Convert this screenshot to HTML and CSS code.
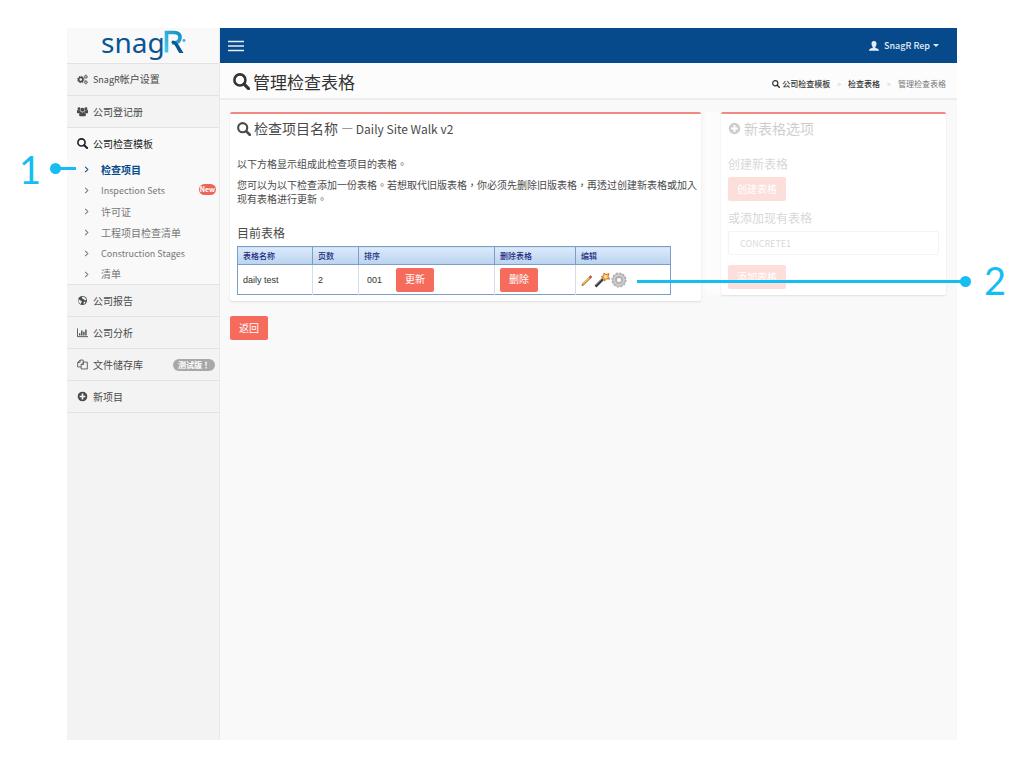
FILE: index.html
```html
<!DOCTYPE html>
<html lang="zh-CN">
<head>
<meta charset="utf-8">
<meta name="viewport" content="width=device-width, initial-scale=1">
<title>管理检查表格</title>
<link rel="stylesheet" href="styles.css">
</head>
<body>
<svg class="sprite" aria-hidden="true">
  <symbol id="search" viewBox="0 0 16 16"><circle cx="6.5" cy="6.5" r="5.2" fill="none" stroke="currentColor" stroke-width="2.4"/><path d="M10.5 10.5 14.6 14.6" stroke="currentColor" stroke-width="3" stroke-linecap="round"/></symbol>
  <symbol id="plus" viewBox="0 0 16 16"><path fill="currentColor" fill-rule="evenodd" d="M8 1a7 7 0 1 1 0 14A7 7 0 0 1 8 1ZM6.8 3.8v3H3.8v2.4h3v3h2.4v-3h3V6.800h-3v-3Z"/></symbol>
  <symbol id="chev" viewBox="0 0 16 16"><path d="M5 2l6 6-6 6" fill="none" stroke="currentColor" stroke-width="2.4"/></symbol>
</svg>
<div class="app">
  <aside class="sidebar">
    <a class="logo" href="#">
      <svg width="92" height="35" viewBox="0 0 92 35" role="img" aria-label="snagR">
        <defs><linearGradient id="bowl" x1="0" y1="1" x2="1" y2="0"><stop offset="0" stop-color="#45c8ee"/><stop offset="1" stop-color="#158fc4"/></linearGradient></defs>
        <text class="logo-text" x="1" y="25">snag</text>
        <path d="M66.500 24.500V4.500h7.500q6 0 6 5t-6 5.500H72" fill="none" stroke="url(#bowl)" stroke-width="3.600"/>
        <path d="M72.500 12.500c4 0 6 4 11 12.500h-4.200c-4-6.500-4.700-9.400-8.200-10.200Z" fill="#0a5593"/>
        <circle cx="84" cy="12.500" r="1.400" fill="#2cb6dd"/>
      </svg>
    </a>
    <nav>
      <ul class="menu">
        <li><a class="item" href="#"><svg class="ico" viewBox="0 0 16 16"><g fill="none" stroke="currentColor"><circle cx="5.500" cy="8" r="3.100" stroke-width="2.400"/><circle cx="5.500" cy="8" r="4.700" stroke-width="1.400" stroke-dasharray="1.850"/><circle cx="12.800" cy="4" r="1.700" stroke-width="1.300"/><circle cx="12.800" cy="4" r="2.600" stroke-width=".9" stroke-dasharray="1.020"/><circle cx="12.800" cy="12" r="1.700" stroke-width="1.300"/><circle cx="12.800" cy="12" r="2.600" stroke-width=".9" stroke-dasharray="1.020"/></g></svg><span><span class="latin">SnagR</span>帐户设置</span></a></li>
        <li><a class="item" href="#"><svg class="ico" viewBox="0 0 16 16"><g fill="currentColor"><circle cx="3" cy="4" r="2.100"/><circle cx="13" cy="4" r="2.100"/><circle cx="8" cy="5.500" r="3"/><path d="M0 10V7q0-1.500 1-1.500 2 1.200 3.800.5 0 2 1 3-2 0-2.600 1.500H1Q0 10.500 0 10ZM16 10V7q0-1.500-1-1.500-2 1.200-3.800.5 0 2-1 3 2 0 2.600 1.500H15q1 0 1-.5ZM3 13.500q0-4.500 2.500-5 2.500 1.600 5 0 2.500.5 2.500 5 0 1.500-2 1.500H5q-2 0-2-1.500Z"/></g></svg>公司登记册</a></li>
        <li class="open"><a class="item" href="#"><svg class="ico"><use href="#search"/></svg>公司检查模板</a>
          <ul class="sub">
            <li><a class="current" href="#"><svg class="chev"><use href="#chev"/></svg>检查项目</a></li>
            <li><a href="#"><svg class="chev"><use href="#chev"/></svg><span class="latin">Inspection Sets</span><span class="new">New</span></a></li>
            <li><a href="#"><svg class="chev"><use href="#chev"/></svg>许可证</a></li>
            <li><a href="#"><svg class="chev"><use href="#chev"/></svg>工程项目检查清单</a></li>
            <li><a href="#"><svg class="chev"><use href="#chev"/></svg><span class="latin">Construction Stages</span></a></li>
            <li><a href="#"><svg class="chev"><use href="#chev"/></svg>清单</a></li>
          </ul>
        </li>
        <li><a class="item" href="#"><svg class="ico" viewBox="0 0 16 16"><circle cx="8" cy="8" r="6.500" fill="currentColor"/><path fill="#f3f3f3" d="M8.500 2.200 12 4l1.500 3-2 1-1.500-2-2-.5-1-2ZM2.500 6l2 1.500L7 9l-.5 2-1.200 2Q2 11 2 8ZM10 9.500l2.500.5-2 3-1 .5Z"/></svg>公司报告</a></li>
        <li><a class="item" href="#"><svg class="ico" viewBox="0 0 16 16"><path d="M.7 2v12H16" fill="none" stroke="currentColor" stroke-width="1.300"/><path d="M4 12.500V9M7 12.500V5M10 12.500V7M13 12.500V3.500" stroke="currentColor" stroke-width="2"/></svg>公司分析</a></li>
        <li><a class="item" href="#"><svg class="ico" viewBox="0 0 16 16"><g fill="none" stroke="currentColor" stroke-width="1.200" stroke-linejoin="round"><path d="M6 11.500H1V5l3.500-3.500H9V5M4.500 1.500V5H1"/><path d="M6 14.500V8l3.500-3.500H15v10ZM9.500 4.500V8H6"/></g></svg>文件储存库<span class="beta" lang="zh-TW">测试版！</span></a></li>
        <li><a class="item" href="#"><svg class="ico"><use href="#plus"/></svg>新项目</a></li>
      </ul>
    </nav>
  </aside>
  <div class="main">
    <header class="topbar">
      <button class="burger" type="button" aria-label="菜单"><svg width="16" height="12" viewBox="0 0 16 12"><path d="M0 1.500h16M0 6h16M0 10.500h16" stroke="#e6eef6" stroke-width="1.300"/></svg></button>
      <button class="user" type="button"><svg width="10" height="10" viewBox="0 0 16 16"><path fill="currentColor" d="M8 0c3 0 4 2 4 4.500S10.800 9 10 9.800v1c1 1 6 1 6 4.700H0c0-3.700 5-3.700 6-4.700v-1C5.200 9 4 7 4 4.500S5 0 8 0Z"/></svg>SnagR Rep<i class="caret"></i></button>
    </header>
    <div class="heading">
      <h1><svg width="17" height="17"><use href="#search"/></svg>管理检查表格</h1>
      <nav class="crumbs"><a href="#"><svg width="8" height="8"><use href="#search"/></svg>公司检查模板</a><span class="sep">&gt;</span><a href="#">检查表格</a><span class="sep">&gt;</span><span class="here">管理检查表格</span></nav>
    </div>
    <main class="content">
      <div class="left">
        <section class="panel">
          <h2><svg width="14" height="14"><use href="#search"/></svg><span>检查项目名称 <span class="latin">— Daily Site Walk v2</span></span></h2>
          <div class="copy" lang="zh-TW">
            <p>以下方格显示组成此检查项目的表格。</p>
            <p>您可以为以下检查添加一份表格。若想取代旧版表格，你必须先删除旧版表格，再透过创建新表格或加入现有表格进行更新。</p>
          </div>
          <h3>目前表格</h3>
          <table class="grid">
            <colgroup><col class="c-name"><col class="c-pages"><col class="c-order"><col class="c-del"><col class="c-edit"></colgroup>
            <thead><tr><th>表格名称</th><th>页数</th><th>排序</th><th>删除表格</th><th>编辑</th></tr></thead>
            <tbody><tr>
              <td>daily test</td><td>2</td>
              <td><div class="order"><input type="text" value="001" aria-label="排序"><button class="btn" type="button">更新</button></div></td>
              <td><button class="btn" type="button">删除</button></td>
              <td><div class="tools">
                <button type="button" aria-label="编辑"><svg width="12" height="14" viewBox="0 0 12 14"><path d="M1.800 11.600 9 4.600" stroke="#b5792a" stroke-width="2.400"/><path d="M2 11 8.800 4.300" stroke="#f8c75c" stroke-width="1.300"/><path d="M8.700 4.900l1.700-1.700" stroke="#b0504a" stroke-width="2.400"/><path d="M.6 12.800 1 10.900l1.500 1.500Z" fill="#443"/></svg></button>
                <button type="button" aria-label="向导"><svg width="16" height="16" viewBox="0 0 16 16"><path d="M1.500 14.500 9 7" stroke="#3b3b43" stroke-width="2.600"/><path d="M2 13 8 7" stroke="#888" stroke-width=".7"/><path d="m10 1 2 1.700L15 1.500l-.8 3 1.500 2.600-3-.2L10.500 9 10 6.200 7.200 4.800l2.500-1.200Z" fill="#fbc24a" stroke="#d4642c" stroke-width=".9"/><circle cx="11.700" cy="4.800" r="1.200" fill="#fff3a8"/></svg></button>
                <button type="button" aria-label="设置"><svg width="16" height="16" viewBox="0 0 16 16"><circle cx="8" cy="8" r="6.900" fill="none" stroke="#a8a8a8" stroke-width="1.300" stroke-dasharray="2.200 1.412"/><circle cx="8" cy="8" r="4.700" fill="none" stroke="#b4b4b4" stroke-width="4.200"/><circle cx="8" cy="8" r="4.900" fill="none" stroke="#cfcfcf" stroke-width="1.600"/><circle cx="8" cy="8" r="2.600" fill="#fff" stroke="#999" stroke-width=".8"/></svg></button>
              </div></td>
            </tr></tbody>
          </table>
        </section>
        <button class="btn back" type="button">返回</button>
      </div>
      <div class="right">
        <section class="panel">
          <form class="faded">
            <h2><svg width="13" height="13"><use href="#plus"/></svg>新表格选项</h2>
            <h3>创建新表格</h3>
            <button class="btn" type="button">创建表格</button>
            <h3><label for="form">或添加现有表格</label></h3>
            <select id="form"><option>CONCRETE1</option></select>
            <button class="btn" type="button">添加表格</button>
          </form>
        </section>
      </div>
    </main>
  </div>
</div>
<div class="note one">1</div><div class="line line-one"></div>
<div class="line line-two"></div><div class="note two">2</div>
</body>
</html>
```
FILE: styles.css
```css
* { box-sizing: border-box; }
body {
  margin: 0;
  padding: 28px 67px;
  position: relative;
  min-height: 100vh;
  background: #fff;
  color: #4a4a4a;
  font: 10px/14px "Noto Sans CJK SC", sans-serif;
}
a { color: inherit; text-decoration: none; }
ul { list-style: none; margin: 0; padding: 0; }
button { font: inherit; border: 0; padding: 0; background: none; color: inherit; cursor: pointer; }
h1, h2, h3, p { margin: 0; font-weight: 400; }
svg { flex: none; }
.sprite { position: absolute; width: 0; height: 0; }
.latin { font-size: 9px; }

.app { display: flex; min-height: calc(100vh - 56px); background: #f9f9f9; }

.sidebar { flex: 0 0 153px; background: #f3f3f3; border-right: 1px solid #e9e9e9; }
.logo { display: flex; justify-content: center; height: 35px; padding-left: 5px; background: #f9f9f9; }
.logo svg { overflow: visible; }
.logo-text { font: 28px "Noto Sans", sans-serif; fill: #0a5593; }
.menu > li { border-top: 1px solid #e2e2e2; }
.menu > li:last-child { border-bottom: 1px solid #e2e2e2; }
.menu > .open { background: #f9f9f9; color: #222; }
.sub li:last-child a { height: 20px; }
.item { display: flex; align-items: center; height: 31px; padding: 0 4px 0 10px; }
.ico { width: 11px; height: 11px; margin-right: 5px; }
.sub { color: #777; }
.sub a { display: flex; align-items: center; height: 21px; padding: 0 3px 0 16px; }
.sub .current { color: #064a8c; font-weight: 700; }
.chev { width: 7px; height: 7px; margin-right: 11px; }
.new, .beta { margin-left: auto; border-radius: 8px; color: #fff; font-weight: 700; font-size: 8px; }
.new { background: #ed6558; line-height: 11px; padding: 0 1px; font-size: 7px; margin-bottom: 3px; }
.beta { background: #a8a8a8; line-height: 12px; padding: 0 5px; font-family: "Noto Sans CJK TC", sans-serif; }

.main { flex: 1; min-width: 0; }
.topbar { display: flex; align-items: center; justify-content: space-between; height: 35px; padding: 0 18px 0 8px; background: #064a8c; color: #fff; }
.burger svg { display: block; }
.user { display: flex; align-items: center; gap: 5px; font-size: 9px; font-weight: 500; color: #e4edf6; }
.caret { border: 3px solid transparent; border-top-color: currentColor; border-bottom: 0; margin-left: -2px; }

.heading { display: flex; align-items: center; justify-content: space-between; height: 37px; padding: 0 11px 0 13px; background: #fcfcfc; border-bottom: 2px solid #ececec; }
h1 { display: flex; align-items: center; gap: 3px; padding-top: 2px; font-size: 17px; line-height: 24px; color: #333; }
.crumbs { display: flex; align-items: center; padding-top: 6px; font-size: 8px; color: #333; }
.crumbs a { display: flex; align-items: center; gap: 2px; font-weight: 500; }
.sep { padding: 0 7px; font-size: 7px; color: #ccc; }
.here { color: #777; }

.content { display: flex; align-items: flex-start; gap: 4px; padding: 12px 11px 12px 10px; }
.left { flex: 1; min-width: 0; }
.right { flex: 0 0 241px; padding-left: 16px; background: #fcfcfc; }
.panel { padding: 5px 2px 6px 7px; background: #fff; border-top: 2px solid #f08a80; border-radius: 2px; box-shadow: 0 1px 2px #0000001c; }
h2 { display: flex; align-items: center; gap: 3px; font-size: 14px; line-height: 18px; }
h2 .latin { font-size: 12px; }
h3 { font-size: 12px; line-height: 18px; }
.copy { padding: 19px 0 18px; font-family: "Noto Sans CJK TC", sans-serif; }
.copy p + p { margin-top: 7px; }

.btn { height: 24px; padding: 0 9px; border-radius: 2px; background: #f56b5c; color: #fff; }
.back { margin-top: 15px; }

.grid { width: 434px; margin-top: 4px; border-collapse: collapse; table-layout: fixed; border: 1px solid #7c9fca; }
.c-name { width: 75px; } .c-pages { width: 46px; } .c-order { width: 136px; } .c-del { width: 81px; }
.grid th { height: 18px; padding: 0 5px; border: 1px solid #7c9fca; background: linear-gradient(#dceafa, #bad3f0); color: #1c2b80; font-size: 8px; line-height: 12px; font-weight: 500; text-align: left; }
.grid td { height: 30px; padding: 0 5px; border-right: 1px solid #d3deeb; font: 9px/12px "Liberation Sans", "Noto Sans CJK SC", sans-serif; color: #333; }
.grid td:last-child { border-right-color: #7c9fca; }
.grid .btn { display: block; font-size: 10px; }
.order { display: flex; align-items: center; }
.order input { width: 32px; padding: 0 0 0 3px; border: 0; background: none; font: inherit; color: inherit; }
.tools { display: flex; align-items: center; gap: 1px; }
.tools button, .tools svg { display: block; }

.faded { opacity: .22; padding-right: 5px; }
.faded h2 { margin-bottom: 18px; color: #222; }
.faded h3 { margin-bottom: 4px; }
.faded .btn { display: block; margin-bottom: 8px; }
.faded select { display: block; width: 100%; height: 24px; margin-bottom: 10px; padding: 0 11px; border: 1px solid #ccc; border-radius: 2px; background: #fff; color: #555; font: 9px "Noto Sans CJK SC", sans-serif; appearance: none; }
.faded .btn:last-child { margin-bottom: 0; }

/* Callouts drawn over the page */
.note { position: absolute; font: 38px/40px Lato, sans-serif; color: #16bdf2; }
.one { left: 19px; top: 149px; }
.two { right: 18px; top: 260px; }
.line { position: absolute; height: 3px; background: #16bdf2; }
.line::after { content: ""; position: absolute; top: -4px; width: 11px; height: 11px; border-radius: 50%; background: #16bdf2; }
.line-one { left: 56px; top: 167px; width: 20px; }
.line-one::after { left: -6px; }
.line-two { left: 637px; right: 59px; top: 280px; }
.line-two::after { right: -6px; }
```
